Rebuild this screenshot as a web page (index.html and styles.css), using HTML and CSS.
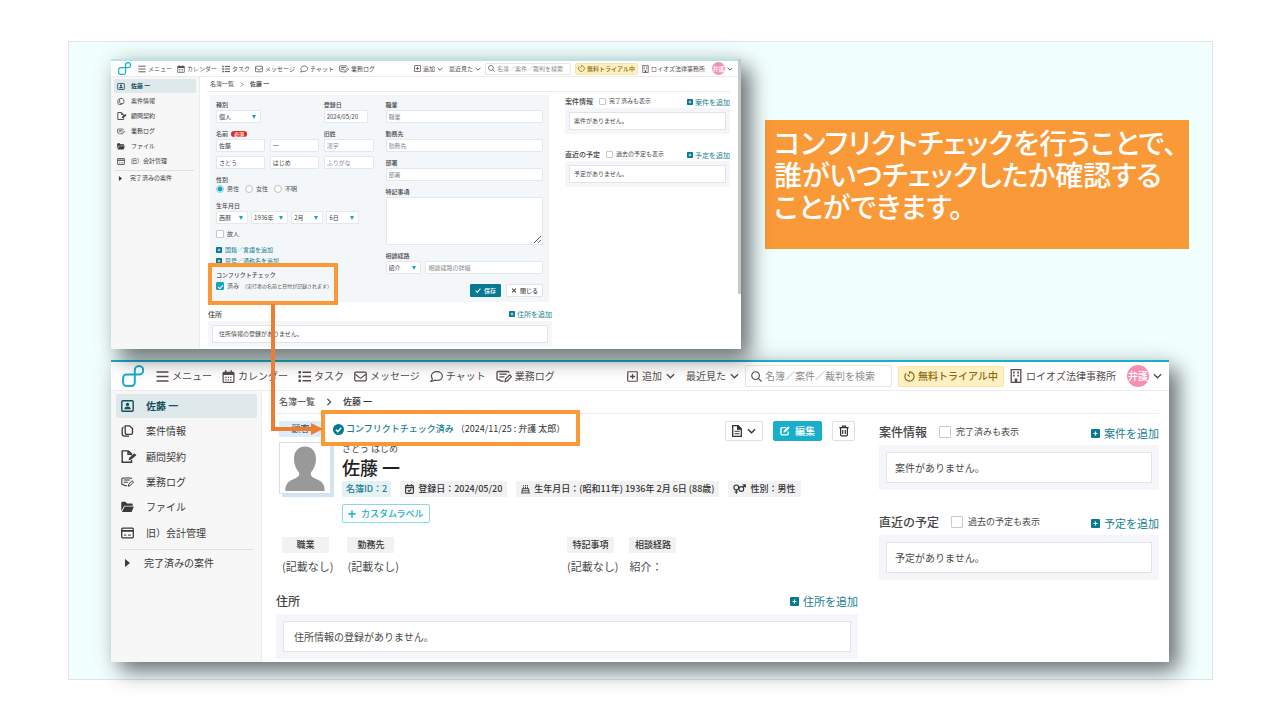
FILE: index.html
```html
<!DOCTYPE html>
<html lang="ja">
<head>
<meta charset="utf-8">
<meta name="viewport" content="width=device-width, initial-scale=1">
<title>コンフリクトチェック</title>
<link rel="stylesheet" href="styles.css">
</head>
<body>
<svg class="sprite" aria-hidden="true">
  <symbol id="i-logo" viewBox="0 0 22 22"><path d="M12.800 5.300V17.500A3.500 3.500 0 0 1 9.300 21H4.600A3.500 3.500 0 0 1 1.100 17.500V13A3.500 3.500 0 0 1 4.600 9.500H17A4.200 4.200 0 1 0 12.800 5.300" fill="none" stroke="currentColor" stroke-width="2"/></symbol>
  <symbol id="i-menu" viewBox="0 0 12 12"><path d="M.5 1.8h11M.5 6h11M.5 10.2h11" stroke="currentColor" stroke-width="1.4"/></symbol>
  <symbol id="i-cal" viewBox="0 0 14 14"><path d="M1.2 3.5a1 1 0 0 1 1-1h9.6a1 1 0 0 1 1 1v8.8a1 1 0 0 1-1 1H2.2a1 1 0 0 1-1-1z" fill="none" stroke="currentColor" stroke-width="1.3"/><path d="M1 2.4h12v3H1zM3.2.4h1.6v3H3.2zM9.2.4h1.6v3H9.2z" fill="currentColor"/><path d="M3.6 8h7M3.6 10.6h7" stroke="currentColor" stroke-width="1.4" stroke-dasharray="1.4 1.2"/></symbol>
  <symbol id="i-list" viewBox="0 0 13 12"><path d="M4.5 1.8H13M4.5 6H13M4.5 10.2H13" stroke="currentColor" stroke-width="1.6"/><path d="M.5.6h2.4V3H.5zM.5 4.8h2.4v2.4H.5zM.5 9h2.4v2.4H.5z" fill="currentColor"/></symbol>
  <symbol id="i-mail" viewBox="0 0 14 12"><rect x=".8" y="1.2" width="12.4" height="9.6" rx="1.2" fill="none" stroke="currentColor" stroke-width="1.3"/><path d="M1.2 3.6 7 8l5.8-4.4" fill="none" stroke="currentColor" stroke-width="1.3"/></symbol>
  <symbol id="i-chat" viewBox="0 0 14 12"><path d="M7.4.7c3.400 0 5.900 2.100 5.900 4.800s-2.500 4.800-5.900 4.800c-.8 0-1.600-.1-2.300-.4-1 .8-2.500 1.300-4.200 1.400 1-.9 1.600-1.700 1.700-2.900-.8-.8-1.100-1.800-1.100-2.900C1.500 2.800 4 .7 7.400.7z" fill="none" stroke="currentColor" stroke-width="1.300"/></symbol>
  <symbol id="i-log" viewBox="0 0 16 12"><path d="M7.600 10.600H5L3.400 9.400H2.200A1.200 1.200 0 0 1 1 8.200V2.200A1.200 1.200 0 0 1 2.200 1h9.600A1.200 1.200 0 0 1 13 2.200M3.400 3.600h7.400M3.400 6.300h5" fill="none" stroke="currentColor" stroke-width="1.300"/><path d="m9 11.200.6-2.600 4-4.200 1.800 1.700-4 4.300z" fill="none" stroke="currentColor" stroke-width="1.200"/></symbol>
  <symbol id="i-plusbox" viewBox="0 0 12 12"><rect x=".8" y=".8" width="10.400" height="10.400" rx=".8" fill="none" stroke="currentColor" stroke-width="1.300"/><path d="M6 3.200v5.600M3.200 6h5.600" stroke="currentColor" stroke-width="1.400"/></symbol>
  <symbol id="i-down" viewBox="0 0 10 6"><path d="m1 1 4 4 4-4" fill="none" stroke="currentColor" stroke-width="1.500"/></symbol>
  <symbol id="i-right" viewBox="0 0 6 10"><path d="m1 1 4 4-4 4" fill="none" stroke="currentColor" stroke-width="1.500"/></symbol>
  <symbol id="i-search" viewBox="0 0 12 12"><circle cx="5" cy="5" r="4.200" fill="none" stroke="currentColor" stroke-width="1.200"/><path d="m8 8 3.500 3.500" stroke="currentColor" stroke-width="1.300"/></symbol>
  <symbol id="i-timer" viewBox="0 0 12 12"><path d="M6 1a5 5 0 1 1-3.800 1.700M6 .6V3.200M3.800 3.800 6.200 6.200" fill="none" stroke="currentColor" stroke-width="1.300"/></symbol>
  <symbol id="i-building" viewBox="0 0 11 14"><path d="M.7.7h9.600v12.600H.7z" fill="none" stroke="currentColor" stroke-width="1.300"/><path d="M2.600 2.600h1.600v1.800H2.600zM6.800 2.600h1.600v1.800H6.800zM2.600 5.800h1.600v1.800H2.600zM6.800 5.800h1.600v1.800H6.800zM4.200 9.400h2.600v4H4.200z" fill="currentColor"/></symbol>
  <symbol id="i-person" viewBox="0 0 13 12"><rect x=".8" y=".8" width="11.400" height="10.400" rx="1" fill="none" stroke="currentColor" stroke-width="1.400"/><circle cx="6.500" cy="4.400" r="1.700" fill="currentColor"/><path d="M3.300 9.200c.2-1.900 1.500-2.600 3.200-2.600s3 .7 3.200 2.600z" fill="currentColor"/></symbol>
  <symbol id="i-copy" viewBox="0 0 13 12"><path d="M4.200.8h4.300l3 2.800v4.200c0 .9-.7 1.600-1.600 1.600H5.800c-.9 0-1.600-.7-1.600-1.600zM2.600 2.200c-.9.300-1.400.9-1.400 2v4.600c0 1.500.9 2.400 2.400 2.400H8" fill="none" stroke="currentColor" stroke-width="1.300"/></symbol>
  <symbol id="i-contract" viewBox="0 0 16 13"><path d="M10.500 10v2.200H1.200V.9h6.200l3.100 3v1.700M7 .9v3.300h3.500" fill="none" stroke="currentColor" stroke-width="1.400"/><path d="m7.600 10.200.5-2.300 5.400-4.700 1.900 2-5.500 4.600z" fill="currentColor"/></symbol>
  <symbol id="i-folder" viewBox="0 0 13 11"><path d="M.3 9.500V1.400C.3.700.7.300 1.400.300h3L6 1.900h4.600c.7 0 1.100.4 1.100 1.100v1.200H3.200z" fill="currentColor"/><path d="M3.700 5h9.200l-2.300 5.400H.9z" fill="currentColor"/></symbol>
  <symbol id="i-card" viewBox="0 0 13 11"><rect x=".7" y=".7" width="11.600" height="9.600" rx="1" fill="none" stroke="currentColor" stroke-width="1.300"/><path d="M1 3.400h11" stroke="currentColor" stroke-width="1.800"/><path d="M3 7.600h2.400M7 7.600h3" stroke="currentColor"/></symbol>
  <symbol id="i-tri" viewBox="0 0 6 8"><path d="M.5 0 5.500 4 .5 8z" fill="currentColor"/></symbol>
  <symbol id="i-add" viewBox="0 0 10 10"><rect width="10" height="10" rx="1.200" fill="currentColor"/><path d="M5 2.800v4.400M2.800 5h4.400" stroke="#fff" stroke-width="1.300"/></symbol>
  <symbol id="i-check" viewBox="0 0 10 8"><path d="m1 4 2.800 3L9 1" fill="none" stroke="currentColor" stroke-width="1.800"/></symbol>
  <symbol id="i-x" viewBox="0 0 8 8"><path d="m1 1 6 6M7 1 1 7" stroke="currentColor" stroke-width="1.800"/></symbol>
  <symbol id="i-okay" viewBox="0 0 11 11"><circle cx="5.500" cy="5.500" r="5.500" fill="currentColor"/><path d="m2.900 5.700 1.900 1.900 3.400-3.900" fill="none" stroke="#fff" stroke-width="1.400"/></symbol>
  <symbol id="i-doc" viewBox="0 0 10 12"><path d="M.7.7h5.500l3.100 3v7.600H.7z" fill="none" stroke="currentColor" stroke-width="1.300"/><path d="M5.600.7v3.600h3.700zM2.500 6.300h5M2.500 8.800h5" fill="currentColor" stroke="currentColor" stroke-width="1.100"/></symbol>
  <symbol id="i-edit" viewBox="0 0 11 11"><path d="M6.500 1.800H2.200a1.200 1.200 0 0 0-1.200 1.200v5.600a1.200 1.200 0 0 0 1.200 1.200h5.600A1.200 1.200 0 0 0 9 8.600V6" fill="none" stroke="currentColor" stroke-width="1.500"/><path d="M3.800 7.200 4.200 5.200 9 .4l1.600 1.600-4.800 4.800z" fill="currentColor"/></symbol>
  <symbol id="i-trash" viewBox="0 0 10 11"><path d="M1.600 2.500v7c0 .5.300.8.800.8h5.200c.5 0 .8-.3.800-.8v-7M.3 2.200h9.400M3.400 2V.7h3.200V2M3.700 4.400v4.200M6.300 4.400v4.200" fill="none" stroke="currentColor" stroke-width="1.200"/></symbol>
  <symbol id="i-date" viewBox="0 0 9 10"><rect x=".6" y="1.600" width="7.800" height="7.800" rx=".8" fill="none" stroke="currentColor" stroke-width="1.100"/><path d="M.6 3.600h7.800M2.600.2v2M6.400.2v2M2.800 6.200l1.300 1.300 2.200-2.300" fill="none" stroke="currentColor" stroke-width="1.100"/></symbol>
  <symbol id="i-cake" viewBox="0 0 10 10"><path d="M1.300 9V4.700h7.400V9M0 9.400h10M1.300 7h7.400M2.800 4.500V2.600M5 4.500V2.600M7.200 4.500V2.600M2.800 1.800V.6M5 1.800V.6M7.200 1.800V.6" fill="none" stroke="currentColor" stroke-width="1"/></symbol>
  <symbol id="i-gender" viewBox="0 0 13 10"><circle cx="3.300" cy="3.400" r="2.400" fill="none" stroke="currentColor" stroke-width="1.100"/><path d="M3.300 5.800v3.900M1.600 8h3.400M9.700 3.400 12 1M9.600.7h2.700v2.700" fill="none" stroke="currentColor" stroke-width="1.100"/><circle cx="8.300" cy="5" r="2.400" fill="none" stroke="currentColor" stroke-width="1.100"/></symbol>
  <symbol id="i-plus" viewBox="0 0 8 8"><path d="M4 .3v7.400M.3 4h7.400" stroke="currentColor" stroke-width="1.400"/></symbol>
  <symbol id="i-avatar" viewBox="0 0 40 45"><path d="M20 .500c7 0 11 5 11 12.500 0 6.500-2.500 10-4.800 13.300-1.200 2.500.3 4.700 3.800 6.200 6.500 2.500 9.700 5 9.700 12.500H.3c0-7.500 3.200-10 9.700-12.500 3.500-1.500 5-3.700 3.800-6.200C11.500 23 9 19.500 9 13 9 5.500 13 .500 20 .500z" fill="#999"/></symbol>
</svg>

<main class="slide">
  <div class="top-row">
    <section class="window small" aria-label="名簿の編集">
      <header class="bar">
        <svg class="logo"><use href="#i-logo"/></svg>
        <nav class="nav">
          <a href="#"><svg><use href="#i-menu"/></svg>メニュー</a>
          <a href="#"><svg><use href="#i-cal"/></svg>カレンダー</a>
          <a href="#"><svg><use href="#i-list"/></svg>タスク</a>
          <a href="#"><svg><use href="#i-mail"/></svg>メッセージ</a>
          <a href="#"><svg><use href="#i-chat"/></svg>チャット</a>
          <a href="#"><svg class="log"><use href="#i-log"/></svg>業務ログ</a>
        </nav>
        <div class="tools">
          <button class="plain"><svg><use href="#i-plusbox"/></svg>追加<svg class="chev"><use href="#i-down"/></svg></button>
          <button class="plain">最近見た<svg class="chev"><use href="#i-down"/></svg></button>
          <label class="search"><svg><use href="#i-search"/></svg><input type="search" aria-label="検索" placeholder="名簿／案件／裁判を検索"></label>
          <a class="trial" href="#"><svg><use href="#i-timer"/></svg>無料トライアル中</a>
          <a class="office" href="#"><svg><use href="#i-building"/></svg>ロイオズ法律事務所</a>
          <button class="plain user"><span class="face">弁護</span><svg class="chev"><use href="#i-down"/></svg></button>
        </div>
      </header>
      <div class="body">
        <aside class="side">
          <ul class="menu">
            <li><a class="on" href="#"><svg><use href="#i-person"/></svg>佐藤 一</a></li>
            <li><a href="#"><svg><use href="#i-copy"/></svg>案件情報</a></li>
            <li><a href="#"><svg class="pen"><use href="#i-contract"/></svg>顧問契約</a></li>
            <li><a href="#"><svg><use href="#i-log"/></svg>業務ログ</a></li>
            <li><a href="#"><svg><use href="#i-folder"/></svg>ファイル</a></li>
            <li><a href="#"><svg><use href="#i-card"/></svg>旧）会計管理</a></li>
          </ul>
          <a class="done" href="#"><svg><use href="#i-tri"/></svg>完了済みの案件</a>
        </aside>
        <div class="page">
          <div class="crumbs"><a href="#">名簿一覧</a><svg><use href="#i-right"/></svg><b>佐藤 一</b></div>
          <div class="columns">
            <div class="primary">
              <form class="form">
                <div class="form-col">
                  <div class="trio">
                    <div class="field wide"><label for="kind">種別</label><span class="select"><select id="kind"><option>個人</option></select></span></div>
                    <div class="field"><label for="reg">登録日</label><input class="date" id="reg" value="2024/05/20"></div>
                  </div>
                  <div class="trio">
                    <div class="field wide"><label for="sei">名前<em>必須</em></label>
                      <div class="pair"><input id="sei" value="佐藤"><input aria-label="名" value="一"></div></div>
                    <div class="field"><label for="old">旧姓</label><input id="old" placeholder="漢字"></div>
                  </div>
                  <div class="trio kana">
                    <div class="pair"><input aria-label="せい" value="さとう"><input aria-label="めい" value="はじめ"></div>
                    <input aria-label="旧姓ふりがな" placeholder="ふりがな">
                  </div>
                  <div class="field"><span class="label">性別</span>
                    <div class="radios">
                      <label><input type="radio" name="sex" checked>男性</label>
                      <label><input type="radio" name="sex">女性</label>
                      <label><input type="radio" name="sex">不明</label>
                    </div></div>
                  <div class="field birth"><label for="era">生年月日</label>
                    <div class="dates">
                      <span class="select"><select id="era"><option>西暦</option></select></span>
                      <span class="select year"><select aria-label="年"><option>1936年</option></select></span>
                      <span class="select"><select aria-label="月"><option>2月</option></select></span>
                      <span class="select"><select aria-label="日"><option>6日</option></select></span>
                    </div></div>
                  <label class="tick"><input type="checkbox">故人</label>
                  <div class="adds">
                    <a class="add" href="#"><svg><use href="#i-add"/></svg>国籍／言語を追加</a>
                    <a class="add" href="#"><svg><use href="#i-add"/></svg>屋号／通称名を追加</a>
                  </div>
                  <div class="conflict">
                    <span class="label">コンフリクトチェック</span>
                    <label class="tick"><input type="checkbox" checked>済み<small>（実行者の名前と日付が記録されます）</small></label>
                  </div>
                </div>
                <div class="form-col">
                  <div class="field"><label for="job">職業</label><input id="job" placeholder="職業"></div>
                  <div class="field"><label for="work">勤務先</label><input id="work" placeholder="勤務先"></div>
                  <div class="field"><label for="dept">部署</label><input id="dept" placeholder="部署"></div>
                  <div class="field"><label for="note">特記事項</label><textarea id="note"></textarea></div>
                  <div class="field"><label for="route">相談経路</label>
                    <div class="route"><span class="select"><select id="route"><option>紹介</option></select></span><input aria-label="相談経路の詳細" placeholder="相談経路の詳細"></div></div>
                  <div class="actions">
                    <button type="button" class="save"><svg><use href="#i-check"/></svg>保存</button>
                    <button type="button" class="close"><svg><use href="#i-x"/></svg>閉じる</button>
                  </div>
                </div>
              </form>
              <section class="block address">
                <div class="head"><h2>住所</h2><a class="add" href="#"><svg><use href="#i-add"/></svg>住所を追加</a></div>
                <div class="panel"><p>住所情報の登録がありません。</p></div>
              </section>
            </div>
            <div class="secondary">
              <section class="block">
                <div class="head"><h2>案件情報</h2><label class="tick"><input type="checkbox">完了済みも表示</label><a class="add" href="#"><svg><use href="#i-add"/></svg>案件を追加</a></div>
                <div class="panel"><p>案件がありません。</p></div>
              </section>
              <section class="block">
                <div class="head"><h2>直近の予定</h2><label class="tick"><input type="checkbox">過去の予定も表示</label><a class="add" href="#"><svg><use href="#i-add"/></svg>予定を追加</a></div>
                <div class="panel"><p>予定がありません。</p></div>
              </section>
            </div>
          </div>
        </div>
      </div>
    </section>
    <p class="callout">コンフリクトチェックを行うことで、<br>誰がいつチェックしたか確認する<br>ことができます。</p>
  </div>

  <section class="window large" aria-label="名簿の詳細">
    <header class="bar">
      <svg class="logo"><use href="#i-logo"/></svg>
      <nav class="nav">
        <a href="#"><svg><use href="#i-menu"/></svg>メニュー</a>
        <a href="#"><svg><use href="#i-cal"/></svg>カレンダー</a>
        <a href="#"><svg><use href="#i-list"/></svg>タスク</a>
        <a href="#"><svg><use href="#i-mail"/></svg>メッセージ</a>
        <a href="#"><svg><use href="#i-chat"/></svg>チャット</a>
        <a href="#"><svg class="log"><use href="#i-log"/></svg>業務ログ</a>
      </nav>
      <div class="tools">
        <button class="plain"><svg><use href="#i-plusbox"/></svg>追加<svg class="chev"><use href="#i-down"/></svg></button>
        <button class="plain">最近見た<svg class="chev"><use href="#i-down"/></svg></button>
        <label class="search"><svg><use href="#i-search"/></svg><input type="search" aria-label="検索" placeholder="名簿／案件／裁判を検索"></label>
        <a class="trial" href="#"><svg><use href="#i-timer"/></svg>無料トライアル中</a>
        <a class="office" href="#"><svg><use href="#i-building"/></svg>ロイオズ法律事務所</a>
        <button class="plain user"><span class="face">弁護</span><svg class="chev"><use href="#i-down"/></svg></button>
      </div>
    </header>
    <div class="body">
      <aside class="side">
        <ul class="menu">
          <li><a class="on" href="#"><svg><use href="#i-person"/></svg>佐藤 一</a></li>
          <li><a href="#"><svg><use href="#i-copy"/></svg>案件情報</a></li>
          <li><a href="#"><svg class="pen"><use href="#i-contract"/></svg>顧問契約</a></li>
          <li><a href="#"><svg><use href="#i-log"/></svg>業務ログ</a></li>
          <li><a href="#"><svg><use href="#i-folder"/></svg>ファイル</a></li>
          <li><a href="#"><svg><use href="#i-card"/></svg>旧）会計管理</a></li>
        </ul>
        <a class="done" href="#"><svg><use href="#i-tri"/></svg>完了済みの案件</a>
      </aside>
      <div class="page">
        <div class="crumbs"><a href="#">名簿一覧</a><svg><use href="#i-right"/></svg><b>佐藤 一</b></div>
        <div class="columns">
          <div class="primary">
            <div class="status">
              <span class="client">顧客</span>
              <div class="checked"><svg><use href="#i-okay"/></svg><a href="#">コンフリクトチェック済み</a><span>（2024/11/25 : 弁護 太郎）</span></div>
              <div class="buttons">
                <button class="docs" aria-label="書類"><svg class="doc"><use href="#i-doc"/></svg><svg class="chev"><use href="#i-down"/></svg></button>
                <button class="edit"><svg><use href="#i-edit"/></svg>編集</button>
                <button class="trash" aria-label="削除"><svg><use href="#i-trash"/></svg></button>
              </div>
            </div>
            <div class="profile">
              <div class="photo"><svg><use href="#i-avatar"/></svg></div>
              <div class="who">
                <span class="ruby">さとう はじめ</span>
                <h1>佐藤 一</h1>
                <div class="chips">
                  <span class="chip id">名簿ID：2</span>
                  <span class="chip"><svg><use href="#i-date"/></svg>登録日：2024/05/20</span>
                  <span class="chip"><svg><use href="#i-cake"/></svg>生年月日：(昭和11年) 1936年 2月 6日 (88歳)</span>
                  <span class="chip"><svg class="gender"><use href="#i-gender"/></svg>性別：男性</span>
                </div>
                <button class="custom"><svg><use href="#i-plus"/></svg>カスタムラベル</button>
              </div>
            </div>
            <div class="facts">
              <dl><div><dt>職業</dt><dd>(記載なし)</dd></div><div><dt>勤務先</dt><dd>(記載なし)</dd></div></dl>
              <dl><div><dt>特記事項</dt><dd>(記載なし)</dd></div><div><dt>相談経路</dt><dd>紹介：</dd></div></dl>
            </div>
            <section class="block address">
              <div class="head"><h2>住所</h2><a class="add" href="#"><svg><use href="#i-add"/></svg>住所を追加</a></div>
              <div class="panel"><p>住所情報の登録がありません。</p></div>
            </section>
          </div>
          <div class="secondary">
            <section class="block">
              <div class="head"><h2>案件情報</h2><label class="tick"><input type="checkbox">完了済みも表示</label><a class="add" href="#"><svg><use href="#i-add"/></svg>案件を追加</a></div>
              <div class="panel"><p>案件がありません。</p></div>
            </section>
            <section class="block">
              <div class="head"><h2>直近の予定</h2><label class="tick"><input type="checkbox">過去の予定も表示</label><a class="add" href="#"><svg><use href="#i-add"/></svg>予定を追加</a></div>
              <div class="panel"><p>予定がありません。</p></div>
            </section>
          </div>
        </div>
      </div>
    </div>
  </section>
  <div class="connector" aria-hidden="true"></div>
</main>
</body>
</html>
```
FILE: styles.css
```css
*, *::before, *::after { box-sizing: border-box; }
body { margin: 0; background: #fff; color: #4a4a4a; font-family: "Noto Sans CJK JP", "Noto Sans", sans-serif; }
h1, h2, p, ul, dl, dd { margin: 0; padding: 0; }
ul { list-style: none; }
a { color: inherit; text-decoration: none; }
button, input, select, textarea { font: inherit; color: inherit; margin: 0; }
svg { flex: none; display: block; }
.sprite { position: absolute; width: 0; height: 0; }

.slide { position: relative; margin: 41px 67px 40px 68px; padding: 17px 23px 17px 42px; border: 1px solid #e2e4e4; background: #f2ffff; }
.top-row { display: grid; grid-template-columns: minmax(0, 630fr) minmax(0, 424fr); gap: 24px; align-items: start; }
.callout { margin-top: 61px; min-height: 129px; padding: 6px 0 0 9px; background: #fa9938; color: #fff; font-size: 28px; line-height: 32px; font-weight: 500; font-feature-settings: "palt"; white-space: nowrap; }

/* shared window parts */
.window { background: #fff; box-shadow: 9px 9px 20px rgba(0, 0, 0, .55), 0 0 24px rgba(0, 40, 40, .08); white-space: nowrap; }
.bar, .nav, .nav a, .tools, .plain, .search, .trial, .office, .menu a, .done, .crumbs, .head, .add, .tick { display: flex; align-items: center; }
.bar { border-bottom: 1px solid #ececec; color: #554d4f; }
.logo { color: #19aeca; }
.tools { margin-left: auto; }
.plain { border: 0; padding: 0; background: none; }
.search { border: 1px solid #e6e6e6; border-radius: 2px; background: #fff; }
.search input { border: 0; padding: 0; outline: 0; background: none; width: 100%; min-width: 0; appearance: none; }
.search input::-webkit-search-cancel-button { display: none; }
::placeholder { color: #8c8c8c; opacity: 1; }
.trial { background: #fff0c2; border: 1px solid #fbe6a8; border-radius: 2px; color: #8a6a10; font-weight: 500; }
.face { display: grid; place-items: center; border-radius: 50%; background: #f78fb3; color: #fff; font-weight: 500; overflow: hidden; }
.body { display: flex; }
.side { flex: none; background: #f7f7f7; border-right: 1px solid #ececec; }
.menu { display: grid; grid-auto-rows: 1fr; }
.menu a { border-radius: 2px; }
.menu a, .done { color: #3a3a3a; }
.menu .on { background: #dfe8eb; color: #14505c; font-weight: 700; }
.page { flex: 1; min-width: 0; }
.crumbs { border-bottom: 1px solid #ececec; }
.crumbs b { font-weight: 500; color: #333; }
.columns { display: grid; }
.head h2 { font-weight: 500; color: #444; }
.head .add { margin-left: auto; }
.add { color: #17808f; }
.add svg { color: #057a92; }
.panel { background: #f5f6f9; }
.panel p { background: #fff; border: 1px solid #e2e5e8; }
.tick input { appearance: none; flex: none; border: 1px solid #c9c9c9; border-radius: 1px; background: #fff; }

/* small window */
.small { position: relative; border-top: 2px solid #b5e4ec; font-size: 6px; line-height: 8px; padding: 0 3px 0 0; }
.small::after { content: ""; position: absolute; right: 0; top: -2px; width: 3px; height: 235px; background: #c6c8c8; }
.small .bar { height: 16px; padding: 0 5px 0 7px; }
.small .logo { width: 13px; height: 13px; }
.small .nav { margin-left: 7px; gap: 5px; }
.small .nav a { gap: 2px; }
.small .nav svg { width: 8px; height: 8px; }
.small .nav .log { width: 10px; }
.small .tools { gap: 4px; }
.small .plain { gap: 2px; }
.small .plain svg, .small .search svg, .small .trial svg, .small .office svg { width: 7px; height: 7px; }
.small .plain .chev { width: 6px; height: 4px; }
.small .plain + .plain { margin-left: 2px; }
.small .search { width: 86px; height: 12px; padding: 0 2px; gap: 2px; }
.small .trial { height: 12px; padding: 0 2px; gap: 2px; }
.small .office { gap: 2px; }
.small .office svg { height: 8px; }
.small .user { margin-left: 3px; }
.small .face { width: 13px; height: 13px; }
.small .body { min-height: 272px; }
.small .side { width: 89px; padding: 2px 3px; }
.small .menu { grid-auto-rows: 15px; }
.small .menu a { height: 14px; gap: 6px; padding-left: 3px; }
.small .menu svg { width: 8px; height: 7px; }
.small .menu .pen { width: 10px; height: 8px; margin-right: -2px; }
.small .done { margin: 1px 2px 0 1px; padding-top: 3px; border-top: 1px solid #dedede; gap: 7px; padding-left: 3px; }
.small .done svg { width: 5px; height: 5px; }
.small .page { padding: 0 8px; }
.small .crumbs { height: 15px; padding-left: 2px; gap: 6px; font-size: 6px; }
.small .crumbs svg { width: 4px; height: 5px; }
.small .columns { grid-template-columns: minmax(0, 344fr) minmax(0, 165fr); gap: 13px; }
.form { display: grid; grid-template-columns: minmax(0, 158fr) minmax(0, 158fr); gap: 12px; margin: 3px 3px 0 2px; padding: 6px 6px 4px; background: #f4f7fa; min-height: 207px; }
.form-col { display: flex; flex-direction: column; gap: 7px; }
.field { display: flex; flex-direction: column; gap: 1px; min-width: 0; }
.field > label, .label { font-weight: 500; line-height: 8px; }
.field em { display: inline-block; margin-left: 3px; padding: 0 3px; border-radius: 3px; background: #df2a20; color: #fff; font-size: 5px; line-height: 6px; font-style: normal; }
.form input:not([type]), .form select, .form textarea { width: 100%; min-width: 0; height: 13px; border: 1px solid #e3e8eb; border-radius: 1px; background: #fff; padding: 0 2px; line-height: 8px; appearance: none; outline: 0; color: #444; }
.form textarea { display: block; height: 48px; }
.select { position: relative; display: block; }
.select::after { content: ""; position: absolute; right: 5px; top: 5px; border: 2px solid transparent; border-top: 4px solid #16a6c2; border-bottom: 0; pointer-events: none; }
.trio { display: grid; grid-template-columns: 103fr 50fr; gap: 5px; }
.kana { margin-top: -3px; }
.wide .select { width: 45px; }
.form .trio .date:not([type]) { width: 44px; }
.pair { display: grid; grid-template-columns: 1fr 1fr; gap: 5px; }
.radios { display: flex; gap: 6px; }
.radios label { display: flex; align-items: center; gap: 3px; }
.radios input { appearance: none; width: 8px; height: 8px; border: 1px solid #bcc2c6; border-radius: 50%; background: #fff; }
.radios input:checked { border-color: #8fd4e2; background: radial-gradient(#0fa3c4 0 2px, #fff 3px); }
.birth { margin-top: 2px; }
.dates { display: grid; grid-template-columns: 32fr 37fr 32fr 32fr; gap: 3px; margin-right: 15px; }
.small .tick { gap: 3px; }
.small .tick input { width: 8px; height: 8px; }
.form-col > .tick { margin-top: -1px; }
.small .adds { line-height: 11px; margin-top: -1px; }
.small .add { gap: 3px; font-size: 6px; }
.small .add svg { width: 6px; height: 6px; }
.conflict { position: relative; display: flex; flex-direction: column; gap: 3px; margin-top: -2px; }
.conflict::after { content: ""; position: absolute; inset: -8px auto auto -8px; width: 130px; height: 42px; border: 4px solid #fb9937; }
.conflict small { font-size: 5px; }
.tick input:checked { border-color: #16a6c2; background: #16a6c2; display: grid; place-items: center; }
.tick input:checked::after { content: ""; width: 5px; height: 3px; border: solid #fff; border-width: 0 0 1px 1px; transform: rotate(-45deg); }
.route { display: grid; grid-template-columns: 36fr 118fr; gap: 4px; }
.actions { display: flex; justify-content: flex-end; gap: 5px; margin-top: 3px; }
.actions button { display: flex; align-items: center; justify-content: center; gap: 3px; height: 13px; padding: 0 4px; border: 1px solid #e0e4e6; border-radius: 1px; background: #fff; font-weight: 500; }
.actions .save { background: #057a92; border-color: #057a92; color: #fff; }
.actions svg { width: 6px; height: 5px; }
.small h2 { font-size: 7px; line-height: 10px; }
.small .head { height: 14px; }
.small .head .tick { margin-left: 6px; font-size: 6px; }
.small .head .tick input { width: 7px; height: 7px; }
.small .head .add { font-size: 7px; gap: 2px; margin-top: 2px; }
.small .address { margin-top: 5px; }
.small .address .head .add { margin-top: 0; }
.small .panel { padding: 4px; }
.small .panel p { height: 18px; padding: 4px; }
.small .address .panel p { padding-left: 6px; }
.small .secondary { display: grid; gap: 13px; align-content: start; padding-top: 2px; }

/* large window */
.large { margin: 11px 20px 0 0; border-top: 2px solid #19aeca; font-size: 10px; line-height: 16px; }
.large .bar { height: 29px; padding: 0 7px 0 11px; }
.large .logo { width: 22px; height: 22px; }
.large .nav { margin-left: 12px; gap: 10px; }
.large .nav a { gap: 3px; }
.large .nav svg { width: 13px; height: 13px; }
.large .nav .log { width: 16px; }
.large .tools { gap: 6px; }
.large .plain { gap: 4px; }
.large .plain svg { width: 11px; height: 11px; }
.large .plain .chev, .docs .chev { width: 9px; height: 6px; }
.large .plain + .plain { margin-left: 5px; }
.large .search { width: 147px; height: 22px; padding: 0 5px; gap: 3px; }
.large .search svg { width: 11px; height: 11px; }
.large .trial { height: 21px; padding: 0 5px; gap: 3px; }
.large .trial svg { width: 11px; height: 11px; }
.large .office { gap: 4px; }
.large .office svg { width: 12px; height: 14px; }
.large .user { margin-left: 5px; }
.large .face { width: 22px; height: 22px; }
.large .side { width: 151px; padding: 3px 4px 3px 5px; }
.large .menu { height: 152px; }
.large .menu a { height: 24px; gap: 12px; padding-left: 5px; }
.large .menu svg { width: 13px; height: 12px; }
.large .menu .pen { width: 16px; height: 13px; margin-right: -3px; }
.large .done { margin: 3px 4px 0; border-top: 1px solid #dedede; padding: 5px 0 0 4px; gap: 13px; }
.large .done svg { width: 7px; height: 8px; }
.large .page { padding: 0 10px 3px 14px; }
.large .crumbs { height: 23px; padding-left: 3px; gap: 11px; font-size: 9px; }
.large .crumbs svg { width: 6px; height: 8px; }
.large .columns { grid-template-columns: minmax(0, 582fr) minmax(0, 280fr); gap: 21px; }
.status { display: flex; align-items: flex-start; height: 20px; margin: 7px 3px 0; }
.client { width: 43px; height: 16px; background: #dcecfa; text-align: center; font-size: 9px; }
.checked { position: relative; display: flex; align-items: center; gap: 2px; margin-left: 11px; font-size: 9px; color: #333; z-index: 1; }
.checked::before { content: ""; position: absolute; z-index: -1; left: -12px; top: -11px; width: 259px; height: 36px; border: 4px solid #fb9937; background: #fff; }
.checked svg { width: 11px; height: 11px; color: #057a92; }
.checked a { color: #17808f; font-weight: 500; }
.buttons { display: flex; gap: 10px; margin-left: auto; }
.buttons button { display: flex; align-items: center; justify-content: center; gap: 5px; height: 20px; padding: 0 6px; border: 1px solid #e0e0e0; border-radius: 2px; background: #fff; color: #333; }
.buttons .edit { background: #19aeca; border-color: #19aeca; color: #fff; font-weight: 500; }
.buttons svg { width: 10px; height: 12px; }
.buttons .trash { width: 23px; }
.profile { display: flex; gap: 11px; margin: 1px 3px 0; }
.photo { width: 52px; height: 52px; padding: 3px 5px 0; border: 1px solid #dcdfe2; background: #fff; box-shadow: 3px 3px 0 #cfe4f7; }
.photo svg { width: 40px; height: 45px; }
.who { display: flex; flex-direction: column; align-items: flex-start; }
.ruby { font-size: 9px; line-height: 14px; }
.large h1 { font-size: 18px; line-height: 22px; font-weight: 500; color: #222; }
.chips { display: flex; gap: 9px; margin-top: 3px; }
.chip { display: flex; align-items: center; gap: 4px; height: 16px; padding: 0 5px; border-radius: 1px; background: #f2f2f2; color: #333; font-size: 9px; font-weight: 500; }
.chip svg { width: 9px; height: 10px; }
.chip .gender { width: 13px; }
.chip.id { padding: 0 4px; background: #e4f1f5; color: #17808f; }
.custom { display: flex; align-items: center; gap: 5px; height: 19px; margin-top: 7px; padding: 0 5px; border: 1px solid #8ad8e6; border-radius: 2px; background: #fff; color: #19aeca; font-size: 9px; font-weight: 500; }
.custom svg { width: 8px; height: 8px; }
.facts { display: grid; grid-template-columns: 285fr 291fr; margin: 14px 0 0 6px; }
.facts dl { display: flex; gap: 14px; }
.facts dt { min-width: 47px; height: 16px; padding: 0 5px; background: #f2f2f2; border-radius: 1px; color: #333; font-size: 9px; font-weight: 500; text-align: center; }
.facts dl > div { display: flex; flex-direction: column; align-items: flex-start; }
.facts dd { margin-top: 5px; font-size: 11px; }
.facts dl + dl { gap: 11px; }
.large h2 { font-size: 12px; line-height: 16px; }
.large .head { height: 27px; }
.large .head .tick { margin-left: 12px; gap: 5px; font-size: 9px; }
.large .head .tick input { width: 12px; height: 12px; }
.large .head .add { gap: 4px; font-size: 11px; margin-top: 3px; }
.large .add svg { width: 9px; height: 9px; }
.large .panel { padding: 7px; }
.large .panel p { height: 31px; padding: 7px 8px; }
.large .address { margin-top: 14px; }
.large .address .head { height: 26px; }
.large .address .head .add { margin-top: 0; }
.large .address .panel p { padding-left: 10px; }
.large .secondary { display: grid; gap: 18px; align-content: start; padding-top: 4px; }

.connector { position: absolute; left: 202px; top: 262px; width: 41px; height: 127px; border: solid #ed7d31; border-width: 0 0 4px 4px; z-index: 2; }
.connector::after { content: ""; position: absolute; left: 36px; bottom: -8px; border: solid transparent; border-width: 6px 0 6px 12px; border-left-color: #ed7d31; }
```
